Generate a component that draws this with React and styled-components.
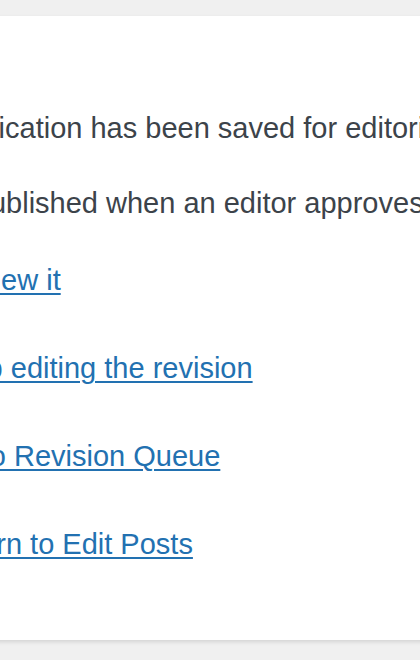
import styled, { createGlobalStyle } from 'styled-components';

const GlobalStyle = createGlobalStyle`
  html, body {
    margin: 0;
    padding: 0;
    background: #f0f0f0;
    overflow: hidden;
  }
  body {
    width: 420px;
    height: 660px;
    font-family: "Liberation Sans", Arial, sans-serif;
  }
`;

const Panel = styled.div`
  margin: 16px 0 0 -160px;
  width: 900px;
  height: 624px;
  box-sizing: border-box;
  padding: 94px 0 0 21px;
  background: #fff;
  box-shadow: 0 2px 4px rgba(0, 0, 0, 0.12);
  display: flex;
  flex-direction: column;
`;

const Message = styled.p`
  margin: 0 0 ${(p) => p.$gap}px;
  font-size: 29px;
  line-height: 36px;
  color: #3c434a;
  white-space: nowrap;
`;

const LinkList = styled.ul`
  list-style: none;
  margin: 0 0 0 74px;
  padding: 0;
  display: flex;
  flex-direction: column;
  gap: 52px;
`;

const LinkItem = styled.li`
  font-size: 29px;
  line-height: 36px;
  white-space: nowrap;
`;

const ActionLink = styled.a`
  color: #2271b1;
  text-decoration: underline;
  text-decoration-thickness: 2px;
  text-underline-offset: 3px;
`;

const links = [
  'Preview it',
  'Keep editing the revision',
  'Go to Revision Queue',
  'Return to Edit Posts',
];

export default function App() {
  return (
    <>
      <GlobalStyle />
      <Panel>
        <Message $gap={39}>Your modification has been saved for editorial review.</Message>
        <Message $gap={41}>It will be published when an editor approves it.</Message>
        <LinkList>
          {links.map((label) => (
            <LinkItem key={label}>
              <ActionLink href="#">{label}</ActionLink>
            </LinkItem>
          ))}
        </LinkList>
      </Panel>
    </>
  );
}
